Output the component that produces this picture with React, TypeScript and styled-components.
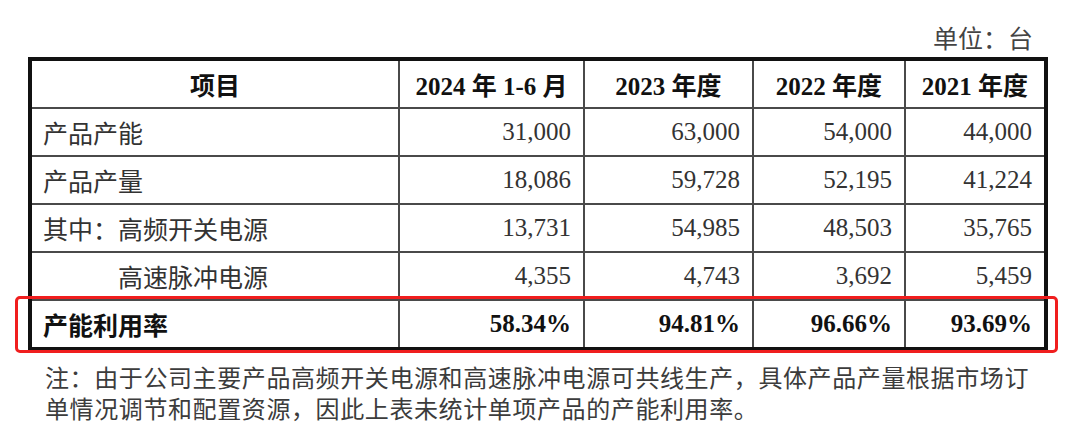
import styled, { createGlobalStyle } from 'styled-components'

const GlobalStyle = createGlobalStyle`
    html, body {
        margin: 0;
        padding: 0;
        background: #fff;
    }
    body {
        font-family: "Liberation Serif", "Noto Sans CJK SC", serif;
        color: #333;
    }
`

const Page = styled.div`
    width: 1080px;
    height: 439px;
    padding: 25px 0 0 28px;
    box-sizing: border-box;
    overflow: hidden;
`

const Unit = styled.div`
    width: 1005px;
    text-align: right;
    font-size: 25px;
    line-height: 30px;
    color: #444;
    margin-bottom: 2px;
`

const TableWrap = styled.div`
    position: relative;
    width: 1020px;
`

const Table = styled.table`
    width: 1020px;
    table-layout: fixed;
    border-collapse: collapse;
    border: 4px solid #111;
    font-size: 25px;
`

const Col = styled.col<{ $w: number }>`
    width: ${p => p.$w}px;
`

const HeadCell = styled.th`
    height: 46px;
    padding: 0 8px;
    border: 2px solid #4a4a4a;
    font-weight: 700;
    color: #111;
    text-align: center;
    white-space: nowrap;
`

const Cell = styled.td<{ $num?: boolean; $bold?: boolean; $indent?: number }>`
    height: 46px;
    padding: 0 12px 0 ${p => 11 + (p.$indent || 0) * 25}px;
    border: 2px solid #4a4a4a;
    text-align: ${p => (p.$num ? 'right' : 'left')};
    font-weight: ${p => (p.$bold ? 700 : 400)};
    color: ${p => (p.$bold ? '#111' : '#333')};
    white-space: nowrap;
`

// red marker drawn over the utilisation row
const Highlight = styled.div`
    position: absolute;
    left: -13px;
    top: 239px;
    width: 1043px;
    height: 57px;
    box-sizing: border-box;
    border: 3px solid #f01e1e;
    border-radius: 5px;
    pointer-events: none;
`

const Note = styled.p`
    margin: 10px 0 0 17px;
    width: 1000px;
    font-family: "Noto Sans CJK SC", sans-serif;
    font-size: 24px;
    letter-spacing: 0.6px;
    line-height: 31px;
    color: #3c3c3c;
`

const widths = [369, 185, 169, 152, 141]
const headers = ['项目', '2024 年 1-6 月', '2023 年度', '2022 年度', '2021 年度']

const rows: { label: string; values: string[]; indent?: number; bold?: boolean }[] = [
    { label: '产品产能', values: ['31,000', '63,000', '54,000', '44,000'] },
    { label: '产品产量', values: ['18,086', '59,728', '52,195', '41,224'] },
    { label: '其中：高频开关电源', values: ['13,731', '54,985', '48,503', '35,765'] },
    { label: '高速脉冲电源', values: ['4,355', '4,743', '3,692', '5,459'], indent: 3 },
    { label: '产能利用率', values: ['58.34%', '94.81%', '96.66%', '93.69%'], bold: true },
]

export default function App() {
    return <>
        <GlobalStyle />
        <Page>
            <Unit>单位：台</Unit>
            <TableWrap>
                <Table>
                    <colgroup>
                        {widths.map((w, i) => <Col key={i} $w={w} />)}
                    </colgroup>
                    <thead>
                        <tr>
                            {headers.map(h => <HeadCell key={h}>{h}</HeadCell>)}
                        </tr>
                    </thead>
                    <tbody>
                        {rows.map(r => (
                            <tr key={r.label}>
                                <Cell $bold={r.bold} $indent={r.indent}>{r.label}</Cell>
                                {r.values.map((v, i) => (
                                    <Cell key={i} $num $bold={r.bold}>{v}</Cell>
                                ))}
                            </tr>
                        ))}
                    </tbody>
                </Table>
                <Highlight />
            </TableWrap>
            <Note>
                注：由于公司主要产品高频开关电源和高速脉冲电源可共线生产，具体产品产量根据市场订单情况调节和配置资源，因此上表未统计单项产品的产能利用率。
            </Note>
        </Page>
    </>
}
